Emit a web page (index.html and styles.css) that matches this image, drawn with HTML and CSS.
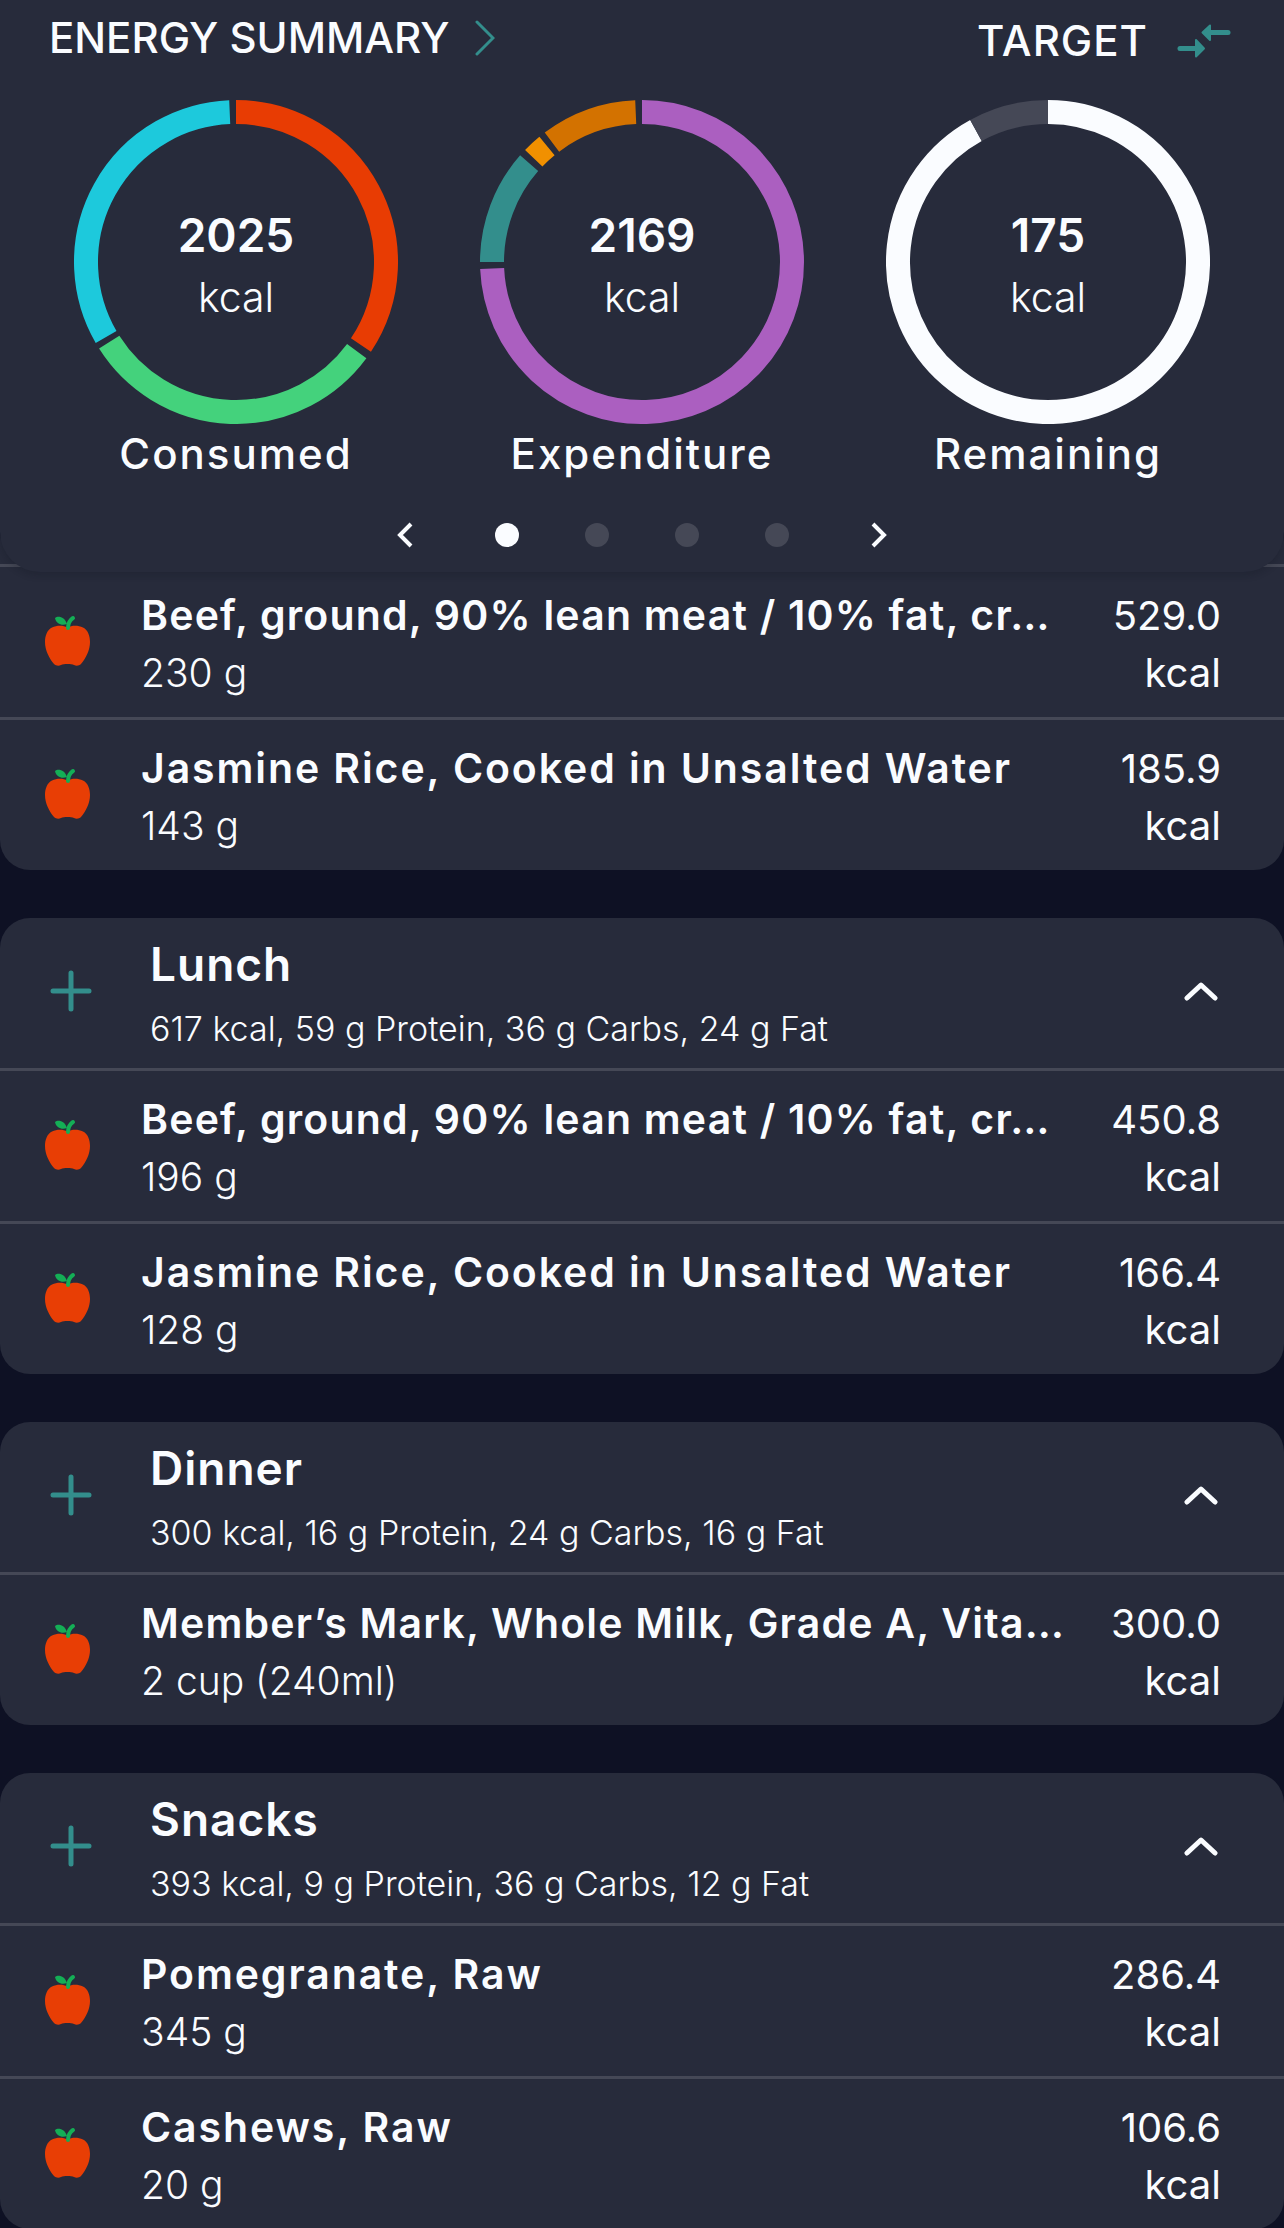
FILE: index.html
```html
<!DOCTYPE html>
<html lang="en">
<head>
	<meta charset="UTF-8">
	<title>Diary</title>
	<link rel="stylesheet" href="styles.css">
</head>
<body>

	<svg class="defs" width="0" height="0">
		<symbol id="apple" viewBox="0 0 45 51">
			<path fill="#e83e05" d="M22.5 12.5C18 10 12 10 7 12.5C2 15 0 21 0 27C0 35 4 43 9 49C11 51 14 51 16 50C19 48.8 26 48.8 29 50C31 51 34 51 36 49C41 43 45 35 45 27C45 21 43 15 38 12.5C33 10 27 10 22.5 12.5Z"/>
			<path fill="#14ae56" d="M10 3C13 0 20 2 22 9C17 11 11 9 10 3Z"/>
			<path fill="none" stroke="#14ae56" stroke-width="4" stroke-linecap="round" d="M23 13C23 8 25 5 28 3"/>
		</symbol>
		<symbol id="plus" viewBox="0 0 42 42">
			<path fill="none" stroke="#338e8c" stroke-width="5" stroke-linecap="round" d="M21 3V39M3 21H39"/>
		</symbol>
		<symbol id="up" viewBox="0 0 34 20">
			<path fill="none" stroke="#fafcff" stroke-width="5" stroke-linecap="round" stroke-linejoin="round" d="M3 17L17 4L31 17"/>
		</symbol>
	</svg>

	<section class="panel">
		<header class="panel-top">
			<div class="panel-title">
				<span>ENERGY SUMMARY</span>
				<svg width="20" height="36" viewBox="0 0 20 36"><path fill="none" stroke="#338e8c" stroke-width="3" stroke-linecap="round" d="M2 2L18 18L2 34"/></svg>
			</div>
			<div class="panel-target">
				<span>TARGET</span>
				<svg width="54" height="34" viewBox="0 0 54 34">
					<g fill="#338e8c" stroke="#338e8c" stroke-linejoin="round" stroke-linecap="round">
						<path stroke-width="5" d="M32 8.5H51"/>
						<path stroke-width="2" d="M33 1.5V16L25.5 8.5Z"/>
						<path stroke-width="5" d="M3 24.5H20"/>
						<path stroke-width="2" d="M19 16V32.500L27 24.500Z"/>
					</g>
				</svg>
			</div>
		</header>

		<div class="rings">
			<div class="ring">
				<div class="ring-dial">
					<svg width="324" height="324" viewBox="0 0 324 324" id="ring-consumed"></svg>
					<div class="ring-value"><b>2025</b><span>kcal</span></div>
				</div>
				<p>Consumed</p>
			</div>
			<div class="ring">
				<div class="ring-dial">
					<svg width="324" height="324" viewBox="0 0 324 324" id="ring-expenditure"></svg>
					<div class="ring-value"><b>2169</b><span>kcal</span></div>
				</div>
				<p>Expenditure</p>
			</div>
			<div class="ring">
				<div class="ring-dial">
					<svg width="324" height="324" viewBox="0 0 324 324" id="ring-remaining"></svg>
					<div class="ring-value"><b>175</b><span>kcal</span></div>
				</div>
				<p>Remaining</p>
			</div>
		</div>

		<nav class="pager">
			<svg class="pager-arrow" width="16" height="26" viewBox="0 0 16 26"><path fill="none" stroke="#fafcff" stroke-width="4" d="M14 2L3 13L14 24"/></svg>
			<i class="dot on"></i>
			<i class="dot"></i>
			<i class="dot"></i>
			<i class="dot"></i>
			<svg class="pager-arrow" width="16" height="26" viewBox="0 0 16 26"><path fill="none" stroke="#fafcff" stroke-width="4" d="M2 2L13 13L2 24"/></svg>
		</nav>
	</section>

	<main class="meals">

		<section class="card card-first">
			<div class="food">
				<svg class="apple"><use href="#apple"/></svg>
				<div class="food-name"><h3 class="long">Beef, ground, 90% lean meat / 10% fat, cr…</h3><p>230 g</p></div>
				<div class="food-kcal"><p>529.0</p><p>kcal</p></div>
			</div>
			<div class="food">
				<svg class="apple"><use href="#apple"/></svg>
				<div class="food-name"><h3>Jasmine Rice, Cooked in Unsalted Water</h3><p>143 g</p></div>
				<div class="food-kcal"><p>185.9</p><p>kcal</p></div>
			</div>
		</section>

		<section class="card">
			<div class="meal-head">
				<svg class="plus"><use href="#plus"/></svg>
				<div class="meal-name"><h2>Lunch</h2><p>617 kcal, 59 g Protein, 36 g Carbs, 24 g Fat</p></div>
				<svg class="up"><use href="#up"/></svg>
			</div>
			<div class="food">
				<svg class="apple"><use href="#apple"/></svg>
				<div class="food-name"><h3 class="long">Beef, ground, 90% lean meat / 10% fat, cr…</h3><p>196 g</p></div>
				<div class="food-kcal"><p>450.8</p><p>kcal</p></div>
			</div>
			<div class="food">
				<svg class="apple"><use href="#apple"/></svg>
				<div class="food-name"><h3>Jasmine Rice, Cooked in Unsalted Water</h3><p>128 g</p></div>
				<div class="food-kcal"><p>166.4</p><p>kcal</p></div>
			</div>
		</section>

		<section class="card">
			<div class="meal-head">
				<svg class="plus"><use href="#plus"/></svg>
				<div class="meal-name"><h2>Dinner</h2><p>300 kcal, 16 g Protein, 24 g Carbs, 16 g Fat</p></div>
				<svg class="up"><use href="#up"/></svg>
			</div>
			<div class="food">
				<svg class="apple"><use href="#apple"/></svg>
				<div class="food-name"><h3 class="long">Member’s Mark, Whole Milk, Grade A, Vita…</h3><p>2 cup (240ml)</p></div>
				<div class="food-kcal"><p>300.0</p><p>kcal</p></div>
			</div>
		</section>

		<section class="card">
			<div class="meal-head">
				<svg class="plus"><use href="#plus"/></svg>
				<div class="meal-name"><h2>Snacks</h2><p>393 kcal, 9 g Protein, 36 g Carbs, 12 g Fat</p></div>
				<svg class="up"><use href="#up"/></svg>
			</div>
			<div class="food">
				<svg class="apple"><use href="#apple"/></svg>
				<div class="food-name"><h3>Pomegranate, Raw</h3><p>345 g</p></div>
				<div class="food-kcal"><p>286.4</p><p>kcal</p></div>
			</div>
			<div class="food">
				<svg class="apple"><use href="#apple"/></svg>
				<div class="food-name"><h3>Cashews, Raw</h3><p>20 g</p></div>
				<div class="food-kcal"><p>106.6</p><p>kcal</p></div>
			</div>
		</section>

	</main>

	<script>
		// arcs are [start, end, colour] in degrees, clockwise from the top
		var rings = {
			'ring-consumed': [[0, 123.6, '#e83c03'], [126.4, 237.7, '#44d27c'], [240, 357.6, '#1dc9dc']],
			'ring-expenditure': [[0, 267.5, '#ab5fc0'], [270, 311.2, '#338e8c'], [313.8, 320.7, '#f19000'], [323.1, 357.6, '#d37200']],
			'ring-remaining': [[0, 331.3, '#fafcff'], [331.3, 360, '#454856']]
		};

		function point(deg) {
			var a = deg * Math.PI / 180;
			return (162 + 150 * Math.sin(a)).toFixed(2) + ' ' + (162 - 150 * Math.cos(a)).toFixed(2);
		}

		for (var id in rings) {
			var html = '';
			rings[id].forEach(function(arc) {
				var large = arc[1] - arc[0] > 180 ? 1 : 0;
				html += '<path fill="none" stroke-width="24" stroke="' + arc[2] + '" d="M' + point(arc[0]) + 'A150 150 0 ' + large + ' 1 ' + point(arc[1]) + '"/>';
			});
			document.getElementById(id).innerHTML = html;
		}
	</script>

</body>
</html>
```

FILE: styles.css
```css
* {
	box-sizing: border-box;
}

html, body {
	height: 2228px;
	overflow: hidden;
}

body {
	margin: 0;
	background: #0e1124;
	color: #fafcff;
	font-family: Inter, "Liberation Sans", sans-serif;
}

h2, h3, p {
	margin: 0;
	font-weight: normal;
}

.defs {
	display: block;
	height: 0;
}

/* Summary panel, it sits over the top of the list */

.panel {
	position: relative;
	z-index: 2;
	height: 572px;
	background: #272b3b;
	border-bottom-left-radius: 40px;
	border-bottom-right-radius: 40px;
	box-shadow: 0 4px 6px rgba( 15 , 18 , 30 , 0.2 );
}

.panel-top {
	display: flex;
	justify-content: space-between;
	align-items: flex-start;
	height: 100px;
	padding: 14px 53px 0 49px;
	font-size: 42px;
	font-weight: 500;
	line-height: 48px;
}

.panel-title {
	display: flex;
	align-items: center;
	gap: 26px;
}

.panel-target {
	display: flex;
	align-items: center;
	gap: 29px;
	padding-top: 3px;
	letter-spacing: 1px;
}

.rings {
	display: grid;
	grid-template-columns: repeat( 3 , 406px );
	padding-left: 33px;
}

.ring {
	text-align: center;
}

.ring-dial {
	position: relative;
	width: 324px;
	height: 324px;
	margin: 0 auto;
}

.ring-dial svg {
	display: block;
}

.ring-value {
	position: absolute;
	left: 0;
	right: 0;
	top: 106px;
}

.ring-value b {
	display: block;
	font-size: 46px;
	font-weight: 600;
	line-height: 58px;
}

.ring-value span {
	display: block;
	margin-top: 3px;
	font-size: 41px;
	font-weight: 300;
	line-height: 60px;
}

.ring p {
	margin-top: 5px;
	font-size: 42px;
	font-weight: 500;
	letter-spacing: 2px;
	line-height: 50px;
}

.pager {
	display: flex;
	justify-content: center;
	align-items: center;
	gap: 66px;
	margin-top: 43px;
}

.pager-arrow {
	margin: 0 16px;
}

.dot {
	display: block;
	width: 24px;
	height: 24px;
	border-radius: 50%;
	background: #454856;
}

.dot.on {
	background: #fafcff;
}

/* Meal cards */

.meals {
	display: flex;
	flex-direction: column;
	gap: 48px;
	margin-top: -61px;
}

.card {
	background: #272b3b;
	border-radius: 30px;
}

/* header of this one is scrolled away under the panel */
.card-first {
	padding-top: 53px;
}

.meal-head {
	display: flex;
	align-items: center;
	height: 150px;
	padding: 0 52px 5px 50px;
}

.plus {
	flex: none;
	width: 42px;
	height: 42px;
	margin-right: 58px;
}

.meal-name {
	flex: 1;
	padding-top: 4px;
}

.meal-name h2 {
	font-size: 46px;
	font-weight: 600;
	letter-spacing: 1px;
	line-height: 58px;
}

.meal-name p {
	margin-top: 14px;
	font-size: 34px;
	font-weight: 300;
	line-height: 44px;
}

.up {
	flex: none;
	width: 34px;
	height: 20px;
	margin-right: 14px;
}

.food {
	display: flex;
	align-items: center;
	height: 153px;
	padding: 0 63px 0 45px;
	border-top: 3px solid #454856;
}

.apple {
	flex: none;
	width: 45px;
	height: 51px;
	margin-right: 51px;
	margin-bottom: 3px;
}

.food-name {
	flex: 1;
	min-width: 0;
	padding-top: 4px;
}

.food-name h3 {
	font-size: 41px;
	font-weight: 600;
	letter-spacing: 1.9px;
	line-height: 57px;
	white-space: nowrap;
}

/* names cut off with the dots run a bit tighter */
.food-name h3.long {
	letter-spacing: 1.2px;
}

.food-name p {
	font-size: 39px;
	font-weight: 300;
	line-height: 57px;
}

.food-kcal {
	flex: none;
	padding-top: 4px;
	text-align: right;
	font-size: 40px;
	font-weight: 300;
	line-height: 57px;
}
```
